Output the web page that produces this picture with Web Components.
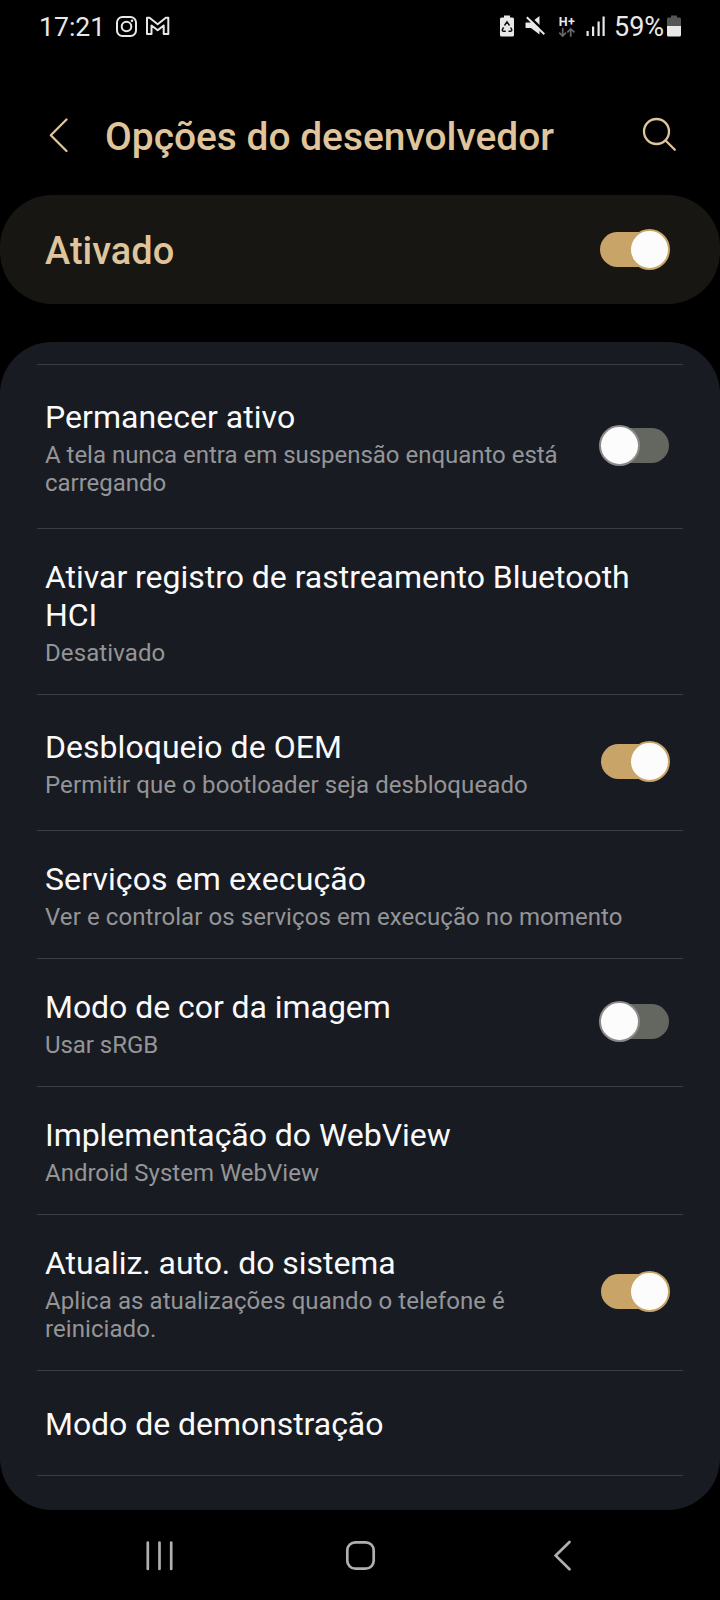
<!DOCTYPE html>
<html lang="pt-BR">
<head>
<meta charset="utf-8">
<title>Opções do desenvolvedor</title>
<style>
html,body{margin:0;background:#000;height:100%}
body{font-family:Roboto,sans-serif;color:#fafafa;-webkit-font-smoothing:antialiased}
</style>
</head>
<body>
<dev-screen></dev-screen>
<script>
const define=(name,html)=>customElements.define(name,class extends HTMLElement{
  constructor(){super();this.attachShadow({mode:'open'}).innerHTML=html;}
});

define('status-bar',`<style>
:host{display:flex;justify-content:space-between;height:54px;box-sizing:border-box;color:#e8e8e8;line-height:54px}
.l,.r{display:flex;align-items:center}
.t{font-size:26.6px;width:63px;margin-left:39px;white-space:nowrap}
.r{margin-right:39px}
.p{font-size:27px;white-space:nowrap;width:48px;margin-left:-1px}
svg{display:block;flex:none}
</style>
<div class="l"><span class="t">17:21</span>
<svg style="margin-left:13px" width="56" height="54" viewBox="115 0 56 54" fill="none" stroke="#e8e8e8" stroke-width="2">
<rect x="117" y="17" width="19" height="19" rx="5.5"/><circle cx="126.500" cy="26.500" r="4.800"/><circle cx="132" cy="20.800" r="1.300" fill="#e8e8e8" stroke="none"/>
<path stroke-linejoin="round" d="M147 34V17.800H149.500L157.700 24.300L165.800 17.800H168.300V34H163.700V25.500L157.700 30.200L151.500 25.500V34Z"/></svg></div>
<div class="r">
<svg width="115" height="54" viewBox="500 0 115 54">
<path fill="#e8e8e8" d="M504 15.500h6v2h2.500q1.500 0 1.500 1.500v16q0 1.500-1.500 1.500h-11q-1.500 0-1.500-1.500V19q0-1.500 1.500-1.500h2.500z"/>
<g fill="none" stroke="#111" stroke-width="1.500"><path d="M504.500 25.500L507 21.900L509.500 25.500M510.600 27.500L511.700 29.500Q512 31.300 510.300 31.300H508.500M505.800 31.300H503.500Q502 31.300 502.400 29.500L503.600 27.300"/></g>
<path fill="#e8e8e8" d="M526 22.500h5l8.500-6.500v18.500l-8.500-6.500h-5q-.5 0-.5-.8V23q0-.5.5-.5z"/>
<path stroke="#000" stroke-width="2.500" d="M528.500 16L546 33"/><path stroke="#e8e8e8" stroke-width="2" d="M526.800 17.300L544.300 34.300"/>
<text x="558.700" y="26" fill="#e8e8e8" font-size="12.500" font-weight="700" font-family="Roboto" textLength="16">H+</text>
<g fill="none" stroke="#686868" stroke-width="1.700"><path d="M562.700 28V36M559.300 32.700L562.700 36L566 32.700M570.700 36.800V29M567.300 32.300L570.700 28.900L574.500 32.300"/></g>
<g fill="#e8e8e8"><rect x="586.500" y="31" width="2.200" height="5"/><rect x="592" y="26.500" width="2.200" height="9.500"/><rect x="597.500" y="21.500" width="2.200" height="14.500"/><rect x="602.500" y="16.500" width="2.200" height="19.500"/></g>
</svg>
<span class="p">59%</span>
<svg style="margin-left:5px" width="14" height="54" viewBox="667 0 14 54"><path fill="#555" d="M671 15.500h6v2h2.500q1.500 0 1.500 1.500v7.500h-14V19q0-1.500 1.500-1.500h2.500z"/><path fill="#e8e8e8" d="M667 26h14v9q0 1.500-1.500 1.500h-11q-1.500 0-1.500-1.500z"/></svg>
</div>`);

define('app-header',`<style>
:host{display:flex;align-items:center;height:83px;margin-top:41px;padding:0 42px 0 47px;margin-bottom:17px}
h1{margin:0 auto 0 34px;font:500 38.9px/50px Roboto,sans-serif;color:#dfc49c;white-space:nowrap}
svg{flex:none;margin-bottom:3px}
</style>
<svg width="24" height="38" viewBox="47 116 24 38" fill="none" stroke="#dfc49c" stroke-width="2.300" stroke-linecap="round" stroke-linejoin="round"><path d="M66.500 119.500L50.800 135.300L66.500 151"/></svg>
<h1><slot></slot></h1>
<svg width="36" height="38" viewBox="642 116 36 38" fill="none" stroke="#dfc49c" stroke-width="2.300" stroke-linecap="round"><circle cx="656.500" cy="131.500" r="12.500"/><path d="M665.800 140.800L674.800 149.800"/></svg>`);

define('toggle-switch',`<style>
:host{display:block;flex:none;position:relative;width:69px;height:35px;border-radius:18px;background:#646660}
i{position:absolute;box-sizing:border-box;left:-1px;top:-3px;width:41px;height:41px;border-radius:50%;background:#fcfcfc;border:2px solid #8c8b8b}
:host([on]){background:#c8a469}
:host([on]) i{left:auto;right:-1px;border-color:#c8a469}
</style><i></i>`);

define('master-card',`<style>
:host{display:flex;align-items:center;justify-content:space-between;box-sizing:border-box;height:109px;border-radius:52px;background:#171612;padding:0 51px 0 45px;font:500 38px/48px Roboto,sans-serif;color:#dfc49c}
span{padding-top:3px}
</style><span><slot></slot></span><toggle-switch on></toggle-switch>`);

define('setting-row',`<style>
:host{display:flex;align-items:center;box-sizing:border-box;margin:0 37px;height:var(--h);border-bottom:1px solid #3b3d42;padding:0 14px 0 8px}
.x{flex:1;min-width:0;padding-top:var(--o,2px)}
.t{font-size:32px;line-height:38px;letter-spacing:var(--tl,0)}
slot[name=sub]::slotted(*){display:block;margin-top:5px;font-size:24px;line-height:28px;color:#949597;letter-spacing:var(--sl,0)}
slot[name=end]::slotted(*){margin-bottom:2px}
slot[name=end]::slotted([on]){width:68px}
</style><div class="x"><div class="t"><slot></slot></div><slot name="sub"></slot></div><slot name="end"></slot>`);

define('nav-bar',`<style>
:host{display:flex;height:90px}svg{display:block}
</style><svg width="720" height="90" viewBox="0 1510 720 90" fill="none" stroke="#b0b0b0" stroke-width="2.700" stroke-linecap="round"><path d="M147.800 1542.500V1569M159.500 1542.500V1569M171.200 1542.500V1569"/><rect x="347.300" y="1542.300" width="26.400" height="26.400" rx="8"/><path stroke-linejoin="miter" d="M569.500 1542L555.700 1555.600L569.500 1569.200"/></svg>`);

define('dev-screen',`<style>
:host{display:flex;flex-direction:column;width:720px;height:1600px;overflow:hidden;background:#000}
main{box-sizing:border-box;height:1168px;margin-top:38px;border-radius:52px;background:#191b22;overflow:hidden}
hr{margin:22px 37px 0;border:0;height:1px;background:#3b3d42}
</style>
<status-bar></status-bar>
<app-header>Opções do desenvolvedor</app-header>
<master-card>Ativado</master-card>
<main><hr>
<setting-row style="--h:164px;--o:1px;--tl:.04px;--sl:-.02px">Permanecer ativo<span slot="sub">A tela nunca entra em suspensão enquanto está<br>carregando</span><toggle-switch slot="end"></toggle-switch></setting-row>
<setting-row style="--h:166px;--tl:-.03px;--sl:.1px">Ativar registro de rastreamento Bluetooth<br>HCI<span slot="sub">Desativado</span></setting-row>
<setting-row style="--h:136px;--tl:.03px;--sl:.095px">Desbloqueio de OEM<span slot="sub">Permitir que o bootloader seja desbloqueado</span><toggle-switch slot="end" on></toggle-switch></setting-row>
<setting-row style="--h:128px;--tl:.1px;--sl:.08px">Serviços em execução<span slot="sub">Ver e controlar os serviços em execução no momento</span></setting-row>
<setting-row style="--h:128px;--tl:-.05px;--sl:-.05px">Modo de cor da imagem<span slot="sub">Usar sRGB</span><toggle-switch slot="end"></toggle-switch></setting-row>
<setting-row style="--h:128px;--tl:-.04px">Implementação do WebView<span slot="sub">Android System WebView</span></setting-row>
<setting-row style="--h:156px;--tl:-.04px;--sl:.075px">Atualiz. auto. do sistema<span slot="sub">Aplica as atualizações quando o telefone é<br>reiniciado.</span><toggle-switch slot="end" on></toggle-switch></setting-row>
<setting-row style="--h:105px;--tl:-.05px">Modo de demonstração</setting-row>
</main>
<nav-bar></nav-bar>`);
</script>
</body>
</html>
